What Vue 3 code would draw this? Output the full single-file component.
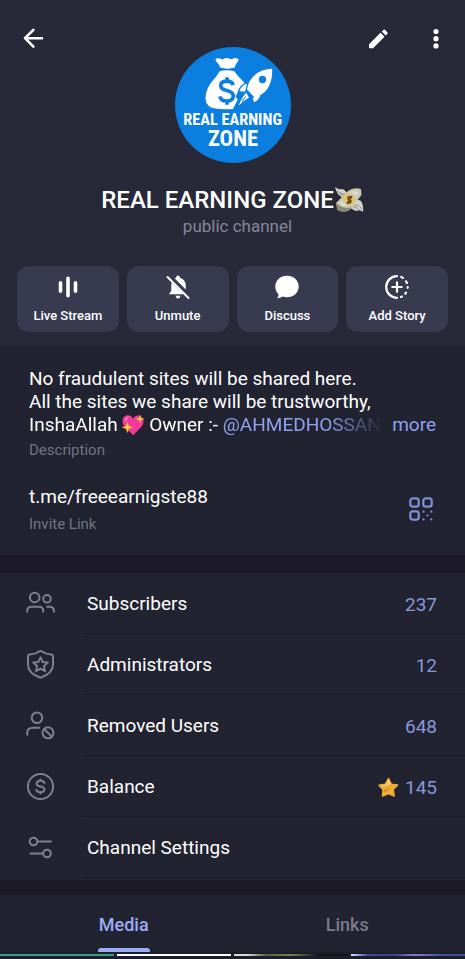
<script setup>
import { ref } from 'vue'

const actions = [
  { icon: 'live', label: 'Live Stream' },
  { icon: 'unmute', label: 'Unmute' },
  { icon: 'discuss', label: 'Discuss' },
  { icon: 'story', label: 'Add Story' },
]

const rows = [
  { icon: 'subscribers', label: 'Subscribers', value: '237' },
  { icon: 'admins', label: 'Administrators', value: '12' },
  { icon: 'removed', label: 'Removed Users', value: '648' },
  { icon: 'balance', label: 'Balance', value: '145', star: true },
  { icon: 'settings', label: 'Channel Settings', value: '' },
]

const tabs = ['Media', 'Links']
const activeTab = ref('Media')
</script>

<template>
  <main class="page">
    <header class="header">
      <div class="top">
        <button class="icon-btn back" aria-label="Back">
          <svg width="24" height="24" viewBox="0 0 24 24" fill="none" stroke="#fff" stroke-width="2.6" stroke-linecap="round" stroke-linejoin="round">
            <path d="M21 12.200H4M12.400 3.800 4 12.200l8.400 8.400" />
          </svg>
        </button>
        <svg class="avatar" viewBox="27 20 350 350" role="img" aria-label="Channel photo">
          <circle cx="202" cy="195" r="175" fill="#0b7fe0" />
          <path fill="#fff" d="M149 57q7-5 13-2 8 5 14 0 8-4 14 0 8 4 14-1 7-3 15 3-1 7-6 12-5 6-6 13-22 7-44 0-1-8-7-13-6-5-7-12z" />
          <path fill="#fff" d="M162 93q22-5 44 0 10 14 22 26l12 13-17 11-13 26 6 10-14 28q-36 3-64-4-18-6-19-28 1-27 17-48 15-15 26-34z" />
          <path fill="none" stroke="#0b7fe0" stroke-width="11" d="M202 135q-2-12-19-12-18 1-18 13 0 11 18 15 20 5 20 17-1 15-20 15-19 0-20-14M184 111v12M184 182v12" />
          <path fill="#fff" d="M320 86q-32 0-56 22-18 19-21 39l24 25q22-5 37-23 18-25 16-63z" />
          <circle cx="291" cy="118" r="11" fill="#0b7fe0" />
          <path fill="#fff" stroke="#0b7fe0" stroke-width="4" d="M247 128q-19 1-29 27l22 2z" />
          <path fill="#fff" d="m285 161-24 14 5 12q16-8 19-26z" />
          <path fill="#fff" stroke="#0b7fe0" stroke-width="4" d="m242 154 11 20q-17 8-37 29 5-24 26-49z" />
          <path fill="none" stroke="#0b7fe0" stroke-width="3" d="m240 169-11 18" />
          <text class="logo-text">
            <tspan x="201" y="256" font-size="49">REAL EARNING</tspan>
            <tspan x="202" y="319" font-size="68">ZONE</tspan>
          </text>
        </svg>
        <div class="tools">
          <button class="icon-btn" aria-label="Edit">
            <svg width="24" height="24" viewBox="0 0 24 24" fill="#fff">
              <path d="M3 21.800v-3.500L14.500 6.800l4 4L7 22.300H3.500zM15.800 5.500l1.500-1.500q.9-.8 1.800 0l2.200 2.200q.8.9 0 1.800l-1.500 1.500z" />
            </svg>
          </button>
          <button class="icon-btn" aria-label="More options">
            <svg width="24" height="24" viewBox="0 0 24 24" fill="#fff">
              <circle cx="12" cy="5.500" r="2.600" />
              <circle cx="12" cy="12.700" r="2.600" />
              <circle cx="12" cy="19.900" r="2.600" />
            </svg>
          </button>
        </div>
      </div>

      <h1 class="title">
        <span>REAL EARNING ZONE</span>
        <svg width="30" height="28" viewBox="0 0 30 28" role="img" aria-label="Money with wings">
          <path fill="#d3d2c8" d="M11 12Q3 11 1 1q4 3 7 2 2 0 5 4zM19 16q3-4 8-1 3 5 2 11-3-3-6-1-5-1-7-4z" />
          <path fill="none" stroke="#96958c" d="M3 5q4 3 8 3M5 8q3 2 6 1M20 19q5-1 8 4M19 21q3-1 6 3" />
          <path fill="#c9c9b4" d="M14 5q5-4 13-2l.5 6-12 15q-6 3-12 0L2 17z" />
          <path fill="#898b78" d="m2 17 1.500 7q6 3 12 0l2-3q-7 3-15.500-4z" />
          <path fill="#ddddcb" d="m18 5 7 1-3 4-5-4zM7 15l6 4-4 2-4-4z" />
          <path fill="#e9c35a" d="m12.500 7 9 5.500-4 7.500-9-6z" />
          <path fill="none" stroke="#5d4510" stroke-width="1.500" d="M17 11q-3-1-3 1t2 2q2 1 0 3l-3-1m5-6-5 8" />
        </svg>
      </h1>
      <p class="subtitle">public channel</p>

      <nav class="actions">
        <button v-for="a in actions" :key="a.label" class="action">
          <svg width="26" height="26" viewBox="0 0 26 26" fill="none" stroke="#fff" stroke-linecap="round">
            <path v-if="a.icon === 'live'" stroke-width="3.600" d="M5.500 8.800v8.400M13 4.300v17.400M20.500 8.800v8.400" />
            <template v-else-if="a.icon === 'unmute'">
              <path fill="#fff" stroke="none" d="M13 1.500q1.700 0 2 2.300 5.800 2 5.800 8v4.700l2.200 3.700H4l2.300-3.700v-5q0-6 4.700-7.700.3-2.300 2-2.300zM10.500 21.800h5q-.5 2.700-2.500 2.700t-2.500-2.700z" />
              <path stroke="#383a50" stroke-width="5" d="m3.500 1.800 20 20" />
              <path stroke-width="2" d="m2.500 3 21 21" />
            </template>
            <path v-else-if="a.icon === 'discuss'" fill="#fff" stroke="none" d="M13 1.700c6.700 0 11.700 4.700 11.700 10.800S19.700 23.300 13 23.300q-2.200 0-4.300-.7-2.500 1.700-5.200 1.700-.6-.4 0-.9 1.200-1.400 1-3.200Q1.300 17 1.300 12.500C1.300 6.400 6.300 1.700 13 1.700z" />
            <template v-else>
              <path stroke-width="2.200" d="M13 2.200a10.800 10.800 0 0 0 0 21.600" />
              <path stroke-width="2.200" d="m17.200 3 1.700.9M22 7.300l.9 1.700M23.700 13v.8M22 18.700l-.8 1M18 22.600l-1 .5M8.300 13h9.400M13 8.300v9.400" />
            </template>
          </svg>
          <span>{{ a.label }}</span>
        </button>
      </nav>
    </header>

    <section class="info">
      <div class="about">
        <p>No fraudulent sites will be shared here.</p>
        <p>All the sites we share will be trustworthy,</p>
        <div class="last-line">
          <p class="clip">
            InshaAllah
            <svg class="heart" width="22" height="22" viewBox="0 0 22 22" role="img" aria-label="Sparkling heart">
              <path fill="#f23a9b" d="M11 4.500C14-.5 21 1 21.500 7c.5 6-7 9.500-10.300 14.500C8.500 17 .5 14 .500 7 .500 1 8-.8 11 4.500z" />
              <path fill="#ff86c4" d="M3 7q0-4 4-4.500Q4.500 5 4 8z" />
              <path fill="#ffd34f" stroke="#f08b2c" stroke-width=".500" d="m5.500 8 1.300 4 4 1.300-4 1.400-1.300 4-1.400-4-4-1.400 4-1.300zM18 1l1 3 3 1-3 1-1 3-1-3-3-1 3-1z" />
            </svg>
            Owner :- <a href="#owner">@AHMEDHOSSAN</a>
          </p>
          <a class="more" href="#more">more</a>
        </div>
        <p class="caption">Description</p>
      </div>
      <div class="invite">
        <div>
          <a class="invite-link" href="#invite">t.me/freeearnigste88</a>
          <p class="caption">Invite Link</p>
        </div>
        <button class="icon-btn qr" aria-label="Show QR code">
          <svg width="24" height="24" viewBox="0 0 24 24" fill="none" stroke="#7f90d8" stroke-width="2.200">
            <rect x="1.300" y="1.300" width="8.400" height="8.400" rx="2.500" />
            <rect x="14.300" y="1.300" width="8.400" height="8.400" rx="2.500" />
            <rect x="1.300" y="14.300" width="8.400" height="8.400" rx="2.500" />
            <path stroke-linecap="round" stroke-width="2.200" d="M14.500 14.700h.01M22.300 14.700h.01M18.400 18.500h.01M14.500 22.400h.01M22.300 22.400h.01" />
          </svg>
        </button>
      </div>
    </section>

    <section class="list">
      <a v-for="r in rows" :key="r.label" class="row" href="#settings">
        <svg width="30" height="30" viewBox="0 0 30 30" fill="none" stroke="#7f808e" stroke-width="2" stroke-linecap="round" stroke-linejoin="round">
          <template v-if="r.icon === 'subscribers'">
            <circle cx="8.700" cy="8.500" r="4.800" />
            <circle cx="21" cy="9.800" r="3.800" />
            <path d="M1.200 22.800v-1q0-4 4.500-4h7q4.500 0 4.500 4v1M21 17.800h2.500q4.500 0 4.500 4.500v.5" />
          </template>
          <template v-else-if="r.icon === 'admins'">
            <path d="M14.500.8q5 3.500 11 3.800 1.500.2 1.500 1.700v8.500q0 8.500-12.500 13-12.500-4.500-12.500-13V6.300q0-1.500 1.500-1.700Q9.500 4.300 14.500.8z" />
            <path d="m14.500 7.300 2.200 4.700 5.100.6-3.800 3.500 1 5.100-4.500-2.500-4.500 2.500 1-5.100-3.800-3.500 5.100-.6z" />
          </template>
          <template v-else-if="r.icon === 'removed'">
            <circle cx="11" cy="6.800" r="5.300" />
            <path d="M1.200 23.800v-2q0-5 6-5h6" />
            <circle cx="22" cy="21.800" r="5.500" />
            <path d="m18.200 18 7.600 7.600" />
          </template>
          <template v-else-if="r.icon === 'balance'">
            <circle cx="14.500" cy="14.500" r="12.600" />
            <path d="M18.500 11.300q-.6-2.500-4-2.500t-4 2.700q0 2.300 4 3t4 3q0 2.700-4 2.700t-4.200-2.500M14.500 7.500v1.300M14.500 20.300v1.300" />
          </template>
          <template v-else>
            <circle cx="7.500" cy="8.500" r="3.800" />
            <circle cx="21" cy="20.500" r="3.800" />
            <path d="M11.800 8.500H25M4.500 20.500h12.300" />
          </template>
        </svg>
        <span class="row-body">
          <span>{{ r.label }}</span>
          <span class="value">
            <svg v-if="r.star" width="21" height="21" viewBox="0 0 21 21" role="img" aria-label="Stars">
              <path fill="#efad38" stroke="#efad38" stroke-width="1.500" stroke-linejoin="round" d="m10.500 1.500 2.800 5.800 6.300.8-4.400 4.500 1 6.400-5.700-2.400-6 2.400.5-6.400L1 8.200l6.300-.9z" />
              <path fill="#f9c862" d="m10.500 1.800 2.500 5.700-8 2L2 8.400l5.800-.9z" />
              <path fill="#a5682a" d="m6 13.300 7-2.800-3.500 2.800-3.800 1.700z" opacity=".7" />
            </svg>
            {{ r.value }}
          </span>
        </span>
      </a>
    </section>

    <nav class="tabs" role="tablist">
      <button
        v-for="t in tabs"
        :key="t"
        class="tab"
        :class="{ active: activeTab === t }"
        role="tab"
        :aria-selected="activeTab === t"
        @click="activeTab = t"
      >
        <span class="tab-label">{{ t }}</span>
      </button>
    </nav>

    <section class="media" aria-label="Shared media">
      <div class="thumb green"></div>
      <div class="thumb white"></div>
      <div class="thumb photo"></div>
      <div class="thumb violet"></div>
    </section>
  </main>
</template>

<style>
body {
  background: #1a1f29;
}
</style>

<style scoped>
.page {
  color: #fff;
  font-family: Roboto, "Noto Sans", sans-serif;
  font-size: 19px;
  background: #1b1a26;
}
p,
h1 {
  margin: 0;
}
a {
  color: #8fa0ec;
  text-decoration: none;
}
button {
  padding: 0;
  border: 0;
  background: none;
  color: inherit;
  font: inherit;
  cursor: pointer;
}
svg {
  flex: none;
}
.icon-btn {
  display: flex;
}
.header {
  padding: 0 17px 14px;
  background: #272939;
}
.top {
  display: grid;
  grid-template-columns: 1fr auto 1fr;
  align-items: start;
}
.back {
  margin: 26px 0 0 4px;
  justify-self: start;
}
.avatar {
  width: 116px;
  height: 116px;
  margin-top: 47px;
}
.logo-text {
  fill: #fff;
  font-family: "Roboto Condensed", "Liberation Sans Narrow", Roboto, sans-serif;
  font-weight: 700;
  text-anchor: middle;
}
.tools {
  display: flex;
  justify-content: flex-end;
  gap: 34px;
  margin-top: 26px;
}
.title {
  display: flex;
  justify-content: center;
  align-items: center;
  margin-top: 23px;
  font-size: 24px;
  line-height: 28px;
  font-weight: 500;
}
.subtitle {
  margin: 1px 0 0 10px;
  color: #85869a;
  font-size: 17px;
  line-height: 22px;
  text-align: center;
}
.actions {
  display: grid;
  grid-template-columns: repeat(4, 1fr);
  gap: 8px;
  margin-top: 29px;
}
.action {
  display: flex;
  flex-direction: column;
  align-items: center;
  gap: 7px;
  padding: 8px 0;
  border-radius: 12px;
  background: #383a50;
  font-size: 13px;
  line-height: 17px;
  font-weight: 500;
}
.info {
  padding: 21px 29px 22px;
  background: #222331;
}
.about {
  line-height: 23px;
}
.last-line {
  display: flex;
  gap: 8px;
}
.clip {
  flex: 1;
  overflow: hidden;
  white-space: nowrap;
  mask-image: linear-gradient(to right, #000 84%, transparent);
}
.heart {
  vertical-align: -5px;
}
.caption {
  color: #727380;
  font-size: 15px;
  line-height: 18px;
}
.about .caption {
  margin-top: 5px;
}
.invite {
  display: flex;
  justify-content: space-between;
  align-items: center;
  margin-top: 26px;
}
.invite-link {
  display: block;
  margin-bottom: 7px;
  color: #fff;
  line-height: 23px;
}
.qr {
  margin-right: 3px;
}
.list {
  margin-top: 18px;
  padding-bottom: 2px;
  background: #222331;
}
.row {
  display: flex;
  align-items: center;
  gap: 27px;
  height: 61px;
  padding-left: 26px;
  color: #fff;
}
.row-body {
  display: flex;
  flex: 1;
  align-items: center;
  justify-content: space-between;
  align-self: stretch;
  padding: 0 28px 0 4px;
  border-bottom: 1px solid #191a25;
}
.value {
  display: flex;
  align-items: center;
  gap: 6px;
  padding-top: 2px;
  color: #8797dc;
}
.tabs {
  display: grid;
  grid-template-columns: 1fr 1fr;
  margin-top: 15px;
  padding: 0 6px 0 12px;
  background: #222331;
}
.tab {
  display: flex;
  justify-content: center;
  color: #7a7b8a;
  font-size: 18px;
  line-height: 60px;
  font-weight: 500;
}
.tab-label {
  display: flex;
  flex-direction: column;
  height: 57px;
  padding: 0 1px;
}
.tab.active {
  color: #9aabf7;
}
.tab.active .tab-label::after {
  content: "";
  height: 4px;
  margin: -7px -1px 0;
  border-radius: 3px 3px 0 0;
  background: #9aabf7;
}
.media {
  display: grid;
  grid-template-columns: repeat(4, 1fr);
  gap: 3px;
  padding: 2px 0 3px;
  background: #1a1f29;
}
.thumb {
  height: 2px;
}
.green {
  background: #3b9c85;
}
.white {
  background: #fff;
}
.photo {
  background: linear-gradient(to right, #d5dadd 12%, #58603c 28%, #77804e 50%, #15131a 75%);
}
.violet {
  background: linear-gradient(to right, #e0e3ff, #4347a5 15%, #3c3d98 38%, #9671d8 55%, #3d51a4 80%);
}
</style>
